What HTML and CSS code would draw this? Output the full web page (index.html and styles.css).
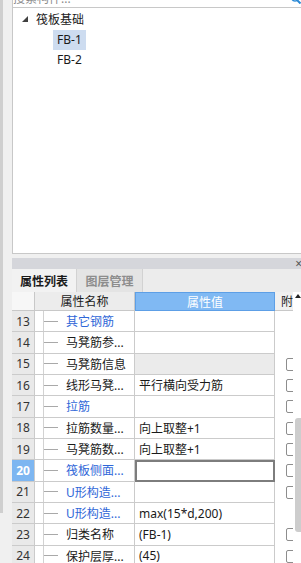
FILE: index.html
```html
<!DOCTYPE html>
<html>
<head>
<meta charset="utf-8">
<link rel="stylesheet" href="styles.css">
</head>
<body>
<div class="app">
  <div class="side"><div class="side-bar"></div></div>
  <div class="main">
    <div class="search">
      <span class="search-text">搜索构件...</span>
      <svg class="search-icon" width="10" height="10" viewBox="0 0 10 10"><circle cx="4" cy="4" r="3" fill="none" stroke="#2b8ad6" stroke-width="1.5"/><line x1="6" y1="6" x2="9.5" y2="9.5" stroke="#2b8ad6" stroke-width="2"/></svg>
    </div>
    <div class="tree">
      <div class="node root"><svg class="caret" width="6" height="6" viewBox="0 0 6 6"><polygon points="6,0 6,6 0,6" fill="#404040"/></svg><span>筏板基础</span></div>
      <div class="node leaf"><span class="label sel">FB-1</span></div>
      <div class="node leaf"><span class="label">FB-2</span></div>
    </div>
    <div class="dock"><span class="close">×</span></div>
    <div class="tabs">
      <div class="tab active">属性列表</div>
      <div class="tab">图层管理</div>
    </div>
    <div class="table">
      <div class="grid">
        <div class="h h-num"></div>
        <div class="h h-name">属性名称</div>
        <div class="h h-val">属性值</div>
        <div class="h h-att">附</div>

        <div class="c num">13</div><div class="c name blue">其它钢筋</div><div class="c val"></div><div class="att"></div>
        <div class="c num">14</div><div class="c name">马凳筋参...</div><div class="c val"></div><div class="att"></div>
        <div class="c num">15</div><div class="c name">马凳筋信息</div><div class="c val gray"></div><div class="att"><span class="cb"></span></div>
        <div class="c num">16</div><div class="c name">线形马凳...</div><div class="c val">平行横向受力筋</div><div class="att"><span class="cb"></span></div>
        <div class="c num">17</div><div class="c name blue">拉筋</div><div class="c val"></div><div class="att"><span class="cb"></span></div>
        <div class="c num">18</div><div class="c name">拉筋数量...</div><div class="c val">向上取整+1</div><div class="att"><span class="cb"></span></div>
        <div class="c num">19</div><div class="c name">马凳筋数...</div><div class="c val">向上取整+1</div><div class="att"><span class="cb"></span></div>
        <div class="c num sel">20</div><div class="c name blue">筏板侧面...</div><div class="c val edit"></div><div class="att"><span class="cb"></span></div>
        <div class="c num">21</div><div class="c name blue">U形构造...</div><div class="c val"></div><div class="att"><span class="cb"></span></div>
        <div class="c num">22</div><div class="c name blue">U形构造...</div><div class="c val">max(15*d,200)</div><div class="att"></div>
        <div class="c num">23</div><div class="c name">归类名称</div><div class="c val">(FB-1)</div><div class="att"><span class="cb"></span></div>
        <div class="c num">24</div><div class="c name">保护层厚...</div><div class="c val">(45)</div><div class="att"><span class="cb"></span></div>
      </div>
      <div class="vscroll">
        <span class="arrow"></span>
        <div class="thumb"></div>
      </div>
    </div>
  </div>
</div>
</body>
</html>
```

FILE: styles.css
```css
* { box-sizing: border-box; }
html, body { margin: 0; padding: 0; }
body {
  width: 301px;
  height: 563px;
  overflow: hidden;
  background: #f0f0f0;
  font-family: "Noto Sans", "Noto Sans CJK SC", sans-serif;
  font-size: 12px;
  color: #1a1a1a;
}
.app { display: flex; height: 563px; }
.side { width: 12px; flex: none; background: #f0f0f0; }
.side-bar { width: 3px; height: 513px; background: #cfcfcf; }
.main { flex: 1; display: flex; flex-direction: column; min-width: 0; }

.search {
  height: 8px;
  flex: none;
  background: #fff;
  border-left: 1px solid #c8c8c8;
  border-bottom: 1px solid #c8c8c8;
  position: relative;
  overflow: hidden;
}
.search-text { display: block; margin-top: -9px; line-height: 16px; color: #8c8c8c; }
.search-icon { position: absolute; right: 0; top: -6px; }

.tree {
  height: 246px;
  flex: none;
  background: #fff;
  border-left: 1px solid #c8c8c8;
  border-bottom: 1px solid #c8c8c8;
}
.node { display: flex; align-items: center; }
.root { height: 22px; padding-left: 9px; }
.caret { margin-right: 8px; flex: none; }
.leaf { height: 20px; padding-left: 40px; }
.label { line-height: 20px; padding: 0 4px; }
.label.sel { background: #cddcf0; }

.dock {
  margin-top: 4px;
  height: 11px;
  flex: none;
  background: #d5d6db;
  display: flex;
  justify-content: flex-end;
  align-items: center;
}
.close { font-size: 12px; line-height: 11px; color: #555; margin-right: -1px; }

.tabs { height: 23px; flex: none; display: flex; background: #ececec; }
.tab {
  width: 65px;
  display: flex;
  align-items: center;
  justify-content: center;
  color: #8d8d8d;
  background: #e4e4e4;
  border-right: 1px solid #d2d2d2;
  font-weight: 700;
}
.tab + .tab { width: 66px; }
.tab.active { background: #f2f2f2; color: #1a1a1a; }

.table { flex: 1; display: flex; min-height: 0; overflow: hidden; }
.grid {
  width: 281px;
  flex: none;
  display: grid;
  grid-template-columns: 23px 100px 140px 18px;
  grid-template-rows: 19px;
  grid-auto-rows: 21.33px;
  align-content: start;
  background: #fff;
}
.h {
  display: flex;
  align-items: center;
  justify-content: center;
  border-bottom: 1px solid #c8c8c8;
  border-right: 1px solid #c8c8c8;
  white-space: nowrap;
}
.h-num { background: #f7f7f7; }
.h-name { background: #ececec; }
.h-val { background: #80b9f3; color: #fff; border: 1px solid #5d9fe6; }
.h-att { background: #f0f0f0; justify-content: flex-start; padding-left: 6px; border-right: none; }

.c {
  border-bottom: 1px solid #cbcbcb;
  border-right: 1px solid #cbcbcb;
  display: flex;
  align-items: center;
  white-space: nowrap;
  overflow: hidden;
}
.num { background: #e9e9e9; justify-content: center; color: #333; }
.num.sel { background: #7db6f1; color: #fff; font-weight: 700; }
.name {
  padding-left: 31px;
  background:
    linear-gradient(#d2d2d2, #d2d2d2) no-repeat 8px 0 / 1px 100%,
    linear-gradient(#a9a9a9, #a9a9a9) no-repeat 8px 50% / 15px 1px,
    #fff;
}
.blue { color: #2f67d8; }
.val { padding-left: 4px; }
.val.gray { background: #ebebeb; }
.val.edit { border: 2px solid #7d7d7d; }
.att {
  display: flex;
  align-items: center;
  padding-left: 11px;
  overflow: hidden;
}
.cb {
  flex: none;
  width: 13px;
  height: 13px;
  border: 1px solid #8d8d8d;
  border-radius: 2px;
  background: #fff;
}

.vscroll { width: 8px; flex: none; background: #fff; display: flex; flex-direction: column; }
.arrow {
  margin: 2px 0 0 2px;
  width: 0;
  height: 0;
  border-left: 3px solid transparent;
  border-right: 3px solid transparent;
  border-bottom: 4px solid #222;
}
.thumb {
  margin: 120px 0 0 2px;
  width: 6px;
  height: 114px;
  background: #cdcdcd;
  border-radius: 3px 0 0 3px;
}
```
